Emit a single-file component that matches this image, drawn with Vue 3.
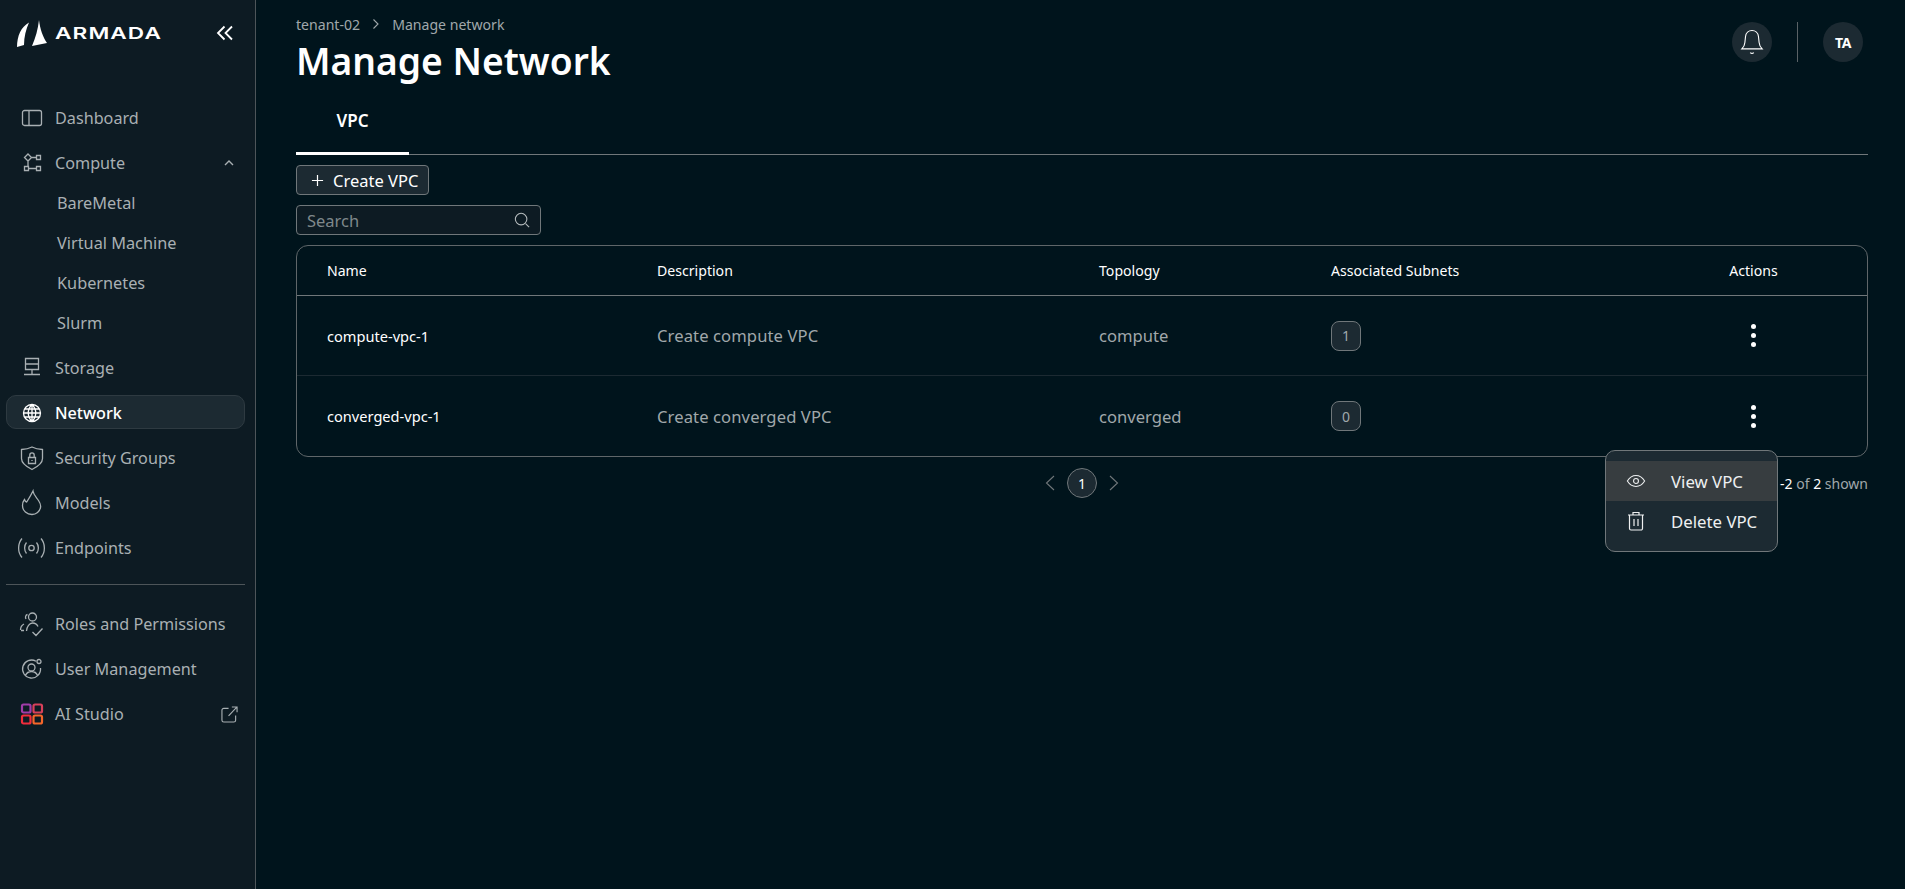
<script setup>
import { ref } from 'vue'

const navTop = [
  { label: 'Dashboard', d: 'M4.500 4.500h15a2 2 0 0 1 2 2v11a2 2 0 0 1-2 2h-15a2 2 0 0 1-2-2v-11a2 2 0 0 1 2-2zM9 4.500v15' },
  {
    label: 'Compute',
    d: 'M8 3l3.500 3.500L8 10 4.500 6.500zM11.500 6.500h5M16.500 4.500h4v4h-4zM8 10v5.500M4.500 15.500h4v4h-4zM8.500 17.500h8M16.500 15.500h4v4h-4z',
    open: true,
    children: ['BareMetal', 'Virtual Machine', 'Kubernetes', 'Slurm'],
  },
  { label: 'Storage', d: 'M5.500 2.500h13v11h-13zM5.500 8h13M12 13.500v5M4 18.500h16' },
  { label: 'Network', active: true, d: 'M12 3.500a8.500 8.500 0 1 0 0 17 8.500 8.500 0 0 0 0-17zM12 3.500c-5 5-5 12 0 17M12 3.500c5 5 5 12 0 17M12 3.500v17M3.500 12h17M4.500 8h15M4.500 16h15' },
  { label: 'Security Groups', d: 'M12 1c3 1.500 6.800 2.300 10.500 2.500v9c0 4.500-4.500 8-10.500 11C6 20.500 1.500 17 1.500 12.500v-9C5.200 3.300 9 2.500 12 1zM8.500 11.500h7v6h-7zM9.800 11.500V9a2.200 2.200 0 0 1 4.400 0v2.500M12 14v1' },
  { label: 'Models', d: 'M13 0c.5 4 3.500 6.500 5.500 9.500 2 3 2.500 5 2 7-.8 4-4.300 7-8.500 7-5 0-9.500-3.500-9.500-9 0-2.500.8-4.500 2-6 .5 1.500 1.200 2.300 2.200 2.500C9 7.500 11 4 13 0z' },
  { label: 'Endpoints', d: 'M11.500 9.300a2.700 2.700 0 1 0 0 5.400 2.700 2.700 0 0 0 0-5.400zM6.500 6.500c-2.500 3-2.500 8 0 11M16.500 6.500c2.500 3 2.500 8 0 11M2 2.500c-4.500 5-4.500 14 0 19M21 2.500c4.500 5 4.500 14 0 19' },
]

const navBottom = [
  { label: 'Roles and Permissions', d: 'M12.500 1a4 4 0 1 0 0 8 4 4 0 0 0 0-8zM7.500 2.500C5.500 3 5 5.500 6 7M.5 18c0-3 1.500-5 3.500-6M6.500 19c.3-4.500 3-8 6-8 2.500 0 4.500 1.300 5.500 3.500M12.500 20l3.500 3.500 6.500-7M1 18.500h3' },
  { label: 'User Management', d: 'M16 4.200A9 9 0 1 0 20.500 11M11.500 7a3.500 3.500 0 1 0 0 7 3.500 3.500 0 0 0 0-7zM5.500 18.500c1-2.500 3.300-4 6-4s5 1.500 6 4M19 2.500a2 2 0 1 0 0 4 2 2 0 0 0 0-4z' },
]

const rows = ref([
  { name: 'compute-vpc-1', description: 'Create compute VPC', topology: 'compute', subnets: 1 },
  { name: 'converged-vpc-1', description: 'Create converged VPC', topology: 'converged', subnets: 0 },
])
</script>

<template>
  <div class="page">
    <aside class="sidebar">
      <div class="brand">
        <div class="logo">
          <svg class="sail" viewBox="0 0 32 28" fill="#fff">
            <path d="M13 3.500C5 8 1 17 1 28l7-2c0-8 2-16 5-22.500z" />
            <path d="M23 1c-1 9-3.500 18-7 26l15-3c-4-6-7-14-8-23z" />
          </svg>
          <span class="wordmark">ARMADA</span>
        </div>
        <svg class="collapse" viewBox="0 0 18 16" fill="none" stroke="#fff" stroke-width="1.800">
          <path d="M8.500 1.500L2 8l6.500 6.500M16 1.500L9.500 8l6.500 6.500" />
        </svg>
      </div>

      <nav class="nav">
        <template v-for="item in navTop" :key="item.label">
          <a class="nav-item" :class="{ active: item.active }">
            <svg class="nav-icon" viewBox="0 0 24 24" fill="none" stroke="currentColor" stroke-width="1.300">
              <path :d="item.d" />
            </svg>
            <span>{{ item.label }}</span>
            <svg v-if="item.open" class="caret" viewBox="0 0 12 8" fill="none" stroke="currentColor" stroke-width="1.400">
              <path d="M2 6l4-4 4 4" />
            </svg>
          </a>
          <div v-if="item.children" class="sub-list">
            <a v-for="child in item.children" :key="child" class="sub-item">{{ child }}</a>
          </div>
        </template>
      </nav>

      <div class="nav-divider"></div>

      <nav class="nav">
        <a v-for="item in navBottom" :key="item.label" class="nav-item">
          <svg class="nav-icon" viewBox="0 0 24 24" fill="none" stroke="currentColor" stroke-width="1.300">
            <path :d="item.d" />
          </svg>
          <span>{{ item.label }}</span>
        </a>
        <a class="nav-item">
          <svg class="nav-icon" viewBox="0 0 24 24" fill="none" stroke-width="2.200">
            <rect x="2" y="2.500" width="8.500" height="8" rx="1.500" stroke="#a03ca8" />
            <rect x="13.500" y="2.500" width="8.500" height="8" rx="1.500" stroke="#d8405a" />
            <rect x="2" y="13.500" width="8.500" height="8" rx="1.500" stroke="#f02c3c" />
            <rect x="13.500" y="13.500" width="8.500" height="8" rx="1.500" stroke="#f5662a" />
          </svg>
          <span>AI Studio</span>
          <svg class="external" viewBox="0 0 18 18" fill="none" stroke="currentColor" stroke-width="1.200">
            <path d="M8 2.500H3a2 2 0 0 0-2 2V15a2 2 0 0 0 2 2h10.500a2 2 0 0 0 2-2v-5M8 10.500L17 1M11.500 1H17v5.500" />
          </svg>
        </a>
      </nav>
    </aside>

    <main class="main">
      <header class="topbar">
        <div>
          <div class="crumbs">
            <span>tenant-02</span>
            <svg viewBox="0 0 10 12" fill="none" stroke="currentColor" stroke-width="1.100">
              <path d="M2.500 1.500L7 6l-4.500 4.500" />
            </svg>
            <span>Manage network</span>
          </div>
          <h1>Manage Network</h1>
        </div>
        <div class="top-actions">
          <div class="round-btn">
            <svg viewBox="0 0 26 30" fill="none" stroke="#fff" stroke-width="1.200">
              <path d="M2 22.500c2-2 3-3.500 3.300-7L6 9c.4-3.800 3.300-6.500 7-6.500s6.600 2.700 7 6.500l.7 6.500c.3 3.500 1.300 5 3.300 7zM11 26.500c1 .9 3 .9 4 0" />
            </svg>
          </div>
          <div class="top-sep"></div>
          <div class="round-btn initials">TA</div>
        </div>
      </header>

      <div class="tabs">
        <div class="tab">VPC</div>
      </div>

      <button class="create-btn">
        <svg viewBox="0 0 14 14" fill="none" stroke="#fff" stroke-width="1.300">
          <path d="M7 1v12M1 7h12" />
        </svg>
        Create VPC
      </button>

      <div class="search">
        <span>Search</span>
        <svg viewBox="0 0 18 18" fill="none" stroke="currentColor" stroke-width="1.200">
          <circle cx="8" cy="8" r="6.500" />
          <path d="M13 13l4 4" />
        </svg>
      </div>

      <div class="table-area">
        <div class="table">
          <div class="row head">
            <div>Name</div>
            <div>Description</div>
            <div>Topology</div>
            <div>Associated Subnets</div>
            <div class="center">Actions</div>
          </div>
          <div v-for="row in rows" :key="row.name" class="row body">
            <div class="name">{{ row.name }}</div>
            <div class="desc">{{ row.description }}</div>
            <div>{{ row.topology }}</div>
            <div><span class="count">{{ row.subnets }}</span></div>
            <div class="center kebab"><i></i><i></i><i></i></div>
          </div>
        </div>

        <div class="pager">
          <div></div>
          <div class="pages">
            <svg viewBox="0 0 10 16" fill="none" stroke="currentColor" stroke-width="1.100">
              <path d="M9 1L1.500 8 9 15" />
            </svg>
            <span class="page-num">1</span>
            <svg viewBox="0 0 10 16" fill="none" stroke="currentColor" stroke-width="1.100">
              <path d="M1 1l7.500 7L1 15" />
            </svg>
          </div>
          <div class="shown"><b>1-2</b> of <b>2</b> shown</div>
        </div>

        <div class="menu">
          <div class="menu-item hover">
            <svg viewBox="0 0 22 16" fill="none" stroke="currentColor" stroke-width="1.200">
              <path d="M1.500 8C4 4 7 2 11 2s7 2 9.500 6C18 12 15 14 11 14S4 12 1.500 8z" />
              <circle cx="11" cy="8" r="2.700" />
            </svg>
            <span>View VPC</span>
          </div>
          <div class="menu-item">
            <svg viewBox="0 0 18 20" fill="none" stroke="currentColor" stroke-width="1.200">
              <path d="M1 4h16M6 4V1.500h6V4M2.500 4v13.500a1.500 1.500 0 0 0 1.500 1.500h10a1.500 1.500 0 0 0 1.500-1.500V4M7 8v7M11 8v7" />
            </svg>
            <span>Delete VPC</span>
          </div>
        </div>
      </div>
    </main>
  </div>
</template>

<style>
html, body {
  margin: 0;
  background: #00141c;
}
</style>

<style scoped>
.page {
  display: flex;
  height: 889px;
  overflow: hidden;
  background: #00141c;
  color: #fff;
  font-family: "Noto Sans", "Open Sans", sans-serif;
  font-size: 16px;
}

/* sidebar */
.sidebar {
  width: 255px;
  flex-shrink: 0;
  background: #0d1b23;
  border-right: 1px solid #4d5559;
}
.brand {
  display: flex;
  align-items: center;
  justify-content: space-between;
  height: 66px;
  padding: 0 21px 0 16px;
  margin-bottom: 34px;
}
.logo {
  display: flex;
  align-items: center;
  gap: 7px;
}
.sail {
  width: 32px;
  height: 28px;
}
.wordmark {
  font-family: Inter, sans-serif;
  font-size: 16.500px;
  font-weight: 600;
  letter-spacing: 0.800px;
  transform: scaleX(1.370);
  transform-origin: left center;
  line-height: 1;
}
.collapse {
  width: 18px;
  height: 16px;
}
.nav {
  display: flex;
  flex-direction: column;
  gap: 11px;
  padding: 0 10px 0 6px;
}
.nav-item {
  display: flex;
  align-items: center;
  gap: 11px;
  height: 34px;
  box-sizing: border-box;
  padding: 2px 13px 0;
  border: 1px solid transparent;
  border-radius: 10px;
  color: #a9b0b3;
  font-size: 16.200px;
  white-space: nowrap;
}
.nav-item.active {
  color: #fff;
  font-weight: 500;
  background: #1c2a32;
  border-color: #2e3a41;
}
.nav-icon {
  width: 24px;
  height: 24px;
  flex-shrink: 0;
  overflow: visible;
}
.caret {
  width: 12px;
  height: 8px;
  margin-left: auto;
  margin-right: -4px;
}
.external {
  width: 17px;
  height: 17px;
  margin-left: auto;
  margin-right: -7px;
}
.sub-list {
  display: flex;
  flex-direction: column;
  margin-top: -7px;
  margin-bottom: -4px;
}
.sub-item {
  display: flex;
  align-items: center;
  height: 40px;
  padding-left: 51px;
  color: #a9b0b3;
  font-size: 16.300px;
}
.nav-divider {
  height: 1px;
  background: #4d5559;
  margin: 20px 10px 21px 6px;
}

/* main */
.main {
  flex: 1;
  min-width: 0;
  padding: 0 37px 0 40px;
}
.topbar {
  display: flex;
  justify-content: space-between;
  height: 88px;
}
.crumbs {
  display: flex;
  align-items: center;
  gap: 11px;
  height: 20px;
  padding-top: 14px;
  font-size: 14.100px;
  color: #a0a8ab;
}
.crumbs svg {
  width: 10px;
  height: 12px;
}
h1 {
  margin: 2px 0 0;
  font-size: 37.200px;
  line-height: 50px;
  font-weight: 600;
}
.top-actions {
  display: flex;
  align-items: center;
  height: 40px;
  margin-top: 22px;
  margin-right: 5px;
}
.round-btn {
  width: 40px;
  height: 40px;
  display: flex;
  align-items: center;
  justify-content: center;
  border-radius: 50%;
  background: #1c2a32;
}
.round-btn svg {
  width: 24px;
  height: 28px;
}
.initials {
  font-size: 14px;
  font-weight: 700;
  letter-spacing: -0.500px;
}
.top-sep {
  width: 1px;
  height: 40px;
  margin: 0 25px;
  background: #5a6266;
}
.tabs {
  height: 67px;
  border-bottom: 1px solid #70777a;
  box-sizing: border-box;
  display: flex;
  margin-bottom: 10px;
}
.tab {
  width: 113px;
  height: 67px;
  box-sizing: border-box;
  padding-top: 21px;
  text-align: center;
  font-size: 17px;
  font-weight: 600;
  border-bottom: 3px solid #fff;
  line-height: 24px;
}
.create-btn {
  display: flex;
  align-items: center;
  gap: 9px;
  width: 133px;
  height: 30px;
  box-sizing: border-box;
  padding: 0 0 0 14px;
  background: #1c2a32;
  border: 1px solid #70777a;
  border-radius: 4px;
  color: #fff;
  font: inherit;
  font-size: 16.500px;
}
.create-btn svg {
  width: 13px;
  height: 13px;
}
.search {
  display: flex;
  align-items: center;
  justify-content: space-between;
  width: 245px;
  height: 30px;
  box-sizing: border-box;
  margin-top: 10px;
  padding: 0 10px;
  background: #0d1b23;
  border: 1px solid #70777a;
  border-radius: 4px;
  color: #7f888b;
  font-size: 16.500px;
}
.search svg {
  width: 16px;
  height: 16px;
  color: #b5bbbd;
}

/* table */
.table-area {
  position: relative;
  margin-top: 10px;
}
.table {
  border: 1px solid #5f6669;
  border-radius: 12px;
}
.row {
  display: grid;
  grid-template-columns: 330px 442px 232px 309px 1fr;
  align-items: center;
  box-sizing: border-box;
  padding-left: 30px;
}
.center {
  text-align: center;
}
.head {
  height: 50px;
  font-size: 14.100px;
  border-bottom: 1px solid #70777a;
}
.body {
  height: 80px;
  color: #a0a8ab;
  font-size: 16.600px;
  border-bottom: 1px solid #1c2a32;
}
.body:last-child {
  border-bottom: 0;
}
.desc {
  letter-spacing: 0.100px;
}
.name {
  font-size: 14.600px;
  color: #fff;
  font-weight: 400;
}
.count {
  display: inline-flex;
  align-items: center;
  justify-content: center;
  width: 30px;
  height: 30px;
  box-sizing: border-box;
  background: #1c2a32;
  border: 1px solid #70777a;
  border-radius: 8px;
  font-size: 14px;
}
.kebab {
  display: flex;
  flex-direction: column;
  align-items: center;
  gap: 4px;
}
.kebab i {
  width: 5px;
  height: 5px;
  border-radius: 50%;
  background: #fff;
}
.pager {
  display: grid;
  grid-template-columns: 1fr auto 1fr;
  align-items: center;
  height: 30px;
  margin-top: 11px;
}
.pages {
  display: flex;
  align-items: center;
  gap: 12px;
  color: #70777a;
}
.pages svg {
  width: 10px;
  height: 16px;
}
.page-num {
  width: 30px;
  height: 30px;
  box-sizing: border-box;
  display: flex;
  align-items: center;
  justify-content: center;
  border: 1px solid #70777a;
  border-radius: 50%;
  background: #1c2a32;
  color: #fff;
  font-size: 14px;
}
.shown {
  justify-self: end;
  font-size: 14px;
  color: #a0a8ab;
}
.shown b {
  color: #fff;
  font-weight: 400;
}

/* row menu */
.menu {
  position: absolute;
  top: 205px;
  right: 90px;
  width: 173px;
  height: 102px;
  box-sizing: border-box;
  padding-top: 10px;
  background: #1c2a32;
  border: 1px solid #70777a;
  border-radius: 10px;
}
.menu-item {
  display: flex;
  align-items: center;
  height: 40px;
  padding-left: 20px;
  gap: 25px;
  color: #eef0f1;
  font-size: 16.800px;
}
.menu-item.hover {
  background: #373d40;
}
.menu-item svg {
  width: 20px;
  height: 20px;
  flex-shrink: 0;
}
</style>
